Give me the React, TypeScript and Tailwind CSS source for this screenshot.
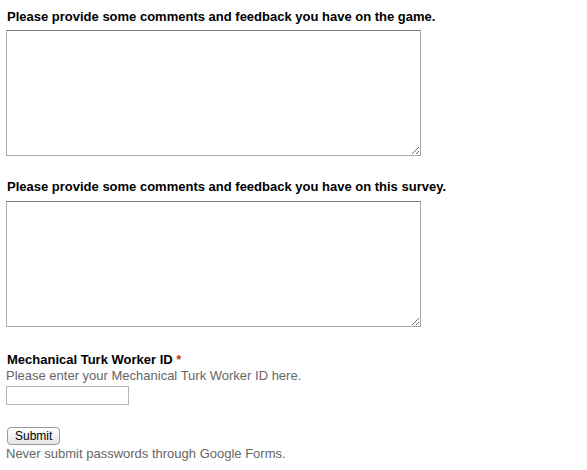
export default function App() {
  return (
    <div className="bg-white w-[587px] h-[470px] text-[13px] text-black pl-[6px] pt-[9px]" style={{ fontFamily: '"Liberation Sans", Arial, sans-serif' }}>
      <div className="font-bold leading-[16px] pl-px">Please provide some comments and feedback you have on the game.</div>
      <textarea className="block mt-[5px] w-[415px] h-[126px] border border-[#a9a9a9] border-t-[#7a7a7a] bg-white resize" />
      <div className="font-bold leading-[16px] pl-px mt-[23px]">Please provide some comments and feedback you have on this survey.</div>
      <textarea className="block mt-[6px] w-[415px] h-[126px] border border-[#a9a9a9] border-t-[#7a7a7a] bg-white resize" />
      <div className="font-bold leading-[16px] pl-px mt-[25px]">
        Mechanical Turk Worker ID <span className="text-[#c43b1d]">*</span>
      </div>
      <div className="text-[#666] leading-[16px]">Please enter your Mechanical Turk Worker ID here.</div>
      <input type="text" className="block mt-[2px] w-[123px] h-[19px] border border-[#b5b5b5] bg-white" />
      <button className="block mt-[22px] ml-px h-[18px] px-[7px] text-[12px] leading-[16px] border border-[#9a9a9a] rounded-[4px] bg-gradient-to-b from-white to-[#e6e6e6]">Submit</button>
      <div className="text-[#666] leading-[16px] mt-[1px]">Never submit passwords through Google Forms.</div>
    </div>
  );
}
